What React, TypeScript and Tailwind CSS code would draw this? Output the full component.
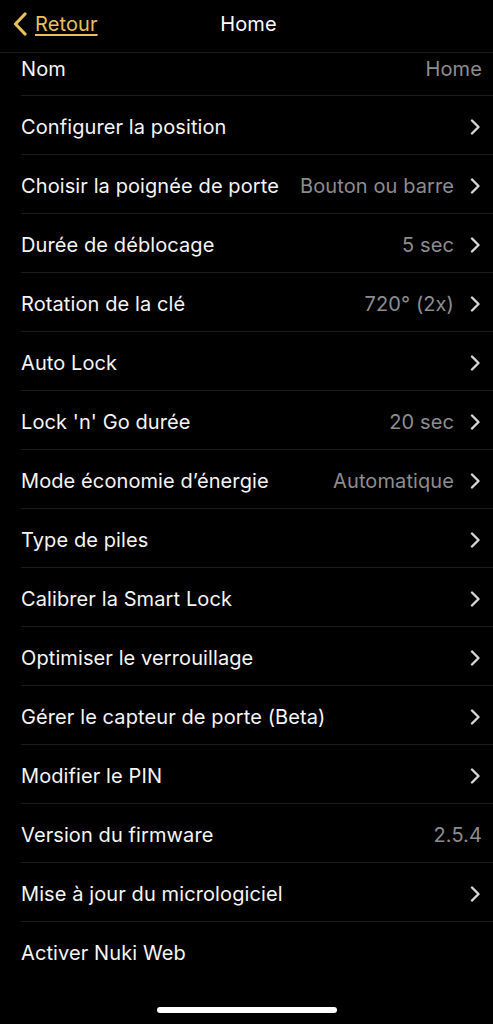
import React from "react";

type Row = { label: string; value?: string; chevron?: boolean };

const rows: Row[] = [
  { label: "Configurer la position", chevron: true },
  { label: "Choisir la poignée de porte", value: "Bouton ou barre", chevron: true },
  { label: "Durée de déblocage", value: "5 sec", chevron: true },
  { label: "Rotation de la clé", value: "720° (2x)", chevron: true },
  { label: "Auto Lock", chevron: true },
  { label: "Lock 'n' Go durée", value: "20 sec", chevron: true },
  { label: "Mode économie d’énergie", value: "Automatique", chevron: true },
  { label: "Type de piles", chevron: true },
  { label: "Calibrer la Smart Lock", chevron: true },
  { label: "Optimiser le verrouillage", chevron: true },
  { label: "Gérer le capteur de porte (Beta)", chevron: true },
  { label: "Modifier le PIN", chevron: true },
  { label: "Version du firmware", value: "2.5.4" },
  { label: "Mise à jour du micrologiciel", chevron: true },
  { label: "Activer Nuki Web" },
];

function Chevron({ className }: { className?: string }) {
  return (
    <svg width="10" height="16" viewBox="0 0 10 16" className={className}>
      <path d="M2 1.5 L8.5 8 L2 14.5" fill="none" stroke="currentColor" strokeWidth="2.4" strokeLinecap="round" strokeLinejoin="round" />
    </svg>
  );
}

function SettingRow({ row, last }: { row: Row; last?: boolean }) {
  return (
    <div className="pl-[21px]">
      <div className={`h-[59px] pt-[3px] flex items-center pr-[13px] ${last ? "" : "border-b border-[#1c1c1c]"}`}>
        <span className="text-[#f5f5f5] whitespace-nowrap">{row.label}</span>
        <div className="flex-1" />
        {row.value && (
          <span className={`text-[#8d8d8f] whitespace-nowrap ${row.chevron ? "mr-[16px]" : "-mr-[2px]"}`}>{row.value}</span>
        )}
        {row.chevron && <Chevron className="text-[#d6d6d6]" />}
      </div>
    </div>
  );
}

export default function App() {
  return (
    <div className="w-[493px] h-[1024px] bg-black overflow-hidden relative text-[20px] tracking-[0.1px] font-['Inter','Liberation_Sans',sans-serif]">
      <header className="h-[53px] pb-[5px] border-b border-[#1c1c1c] flex items-center relative">
        <div className="flex items-center pl-[12px] gap-[7px] text-[#e8c15c]">
          <svg width="16" height="24" viewBox="0 0 16 24">
            <path d="M13 2 L3.5 12 L13 22" fill="none" stroke="currentColor" strokeWidth="3.2" strokeLinecap="round" strokeLinejoin="round" />
          </svg>
          <span className="underline underline-offset-[3px] decoration-[1.5px]">Retour</span>
        </div>
        <div className="absolute left-[4px] right-0 top-0 bottom-[5px] flex items-center justify-center text-white pointer-events-none">Home</div>
      </header>
      <div className="pl-[21px]">
        <div className="h-[43px] pb-[10px] flex items-center pr-[11px] border-b border-[#1c1c1c]">
          <span className="text-[#f5f5f5]">Nom</span>
          <div className="flex-1" />
          <span className="text-[#8d8d8f]">Home</span>
        </div>
      </div>
      {rows.map((r, i) => (
        <SettingRow key={r.label} row={r} last={i === rows.length - 1} />
      ))}
      <div className="absolute bottom-[11px] left-0 right-0 flex justify-center">
        <div className="w-[180px] h-[6px] rounded-full bg-white" />
      </div>
    </div>
  );
}
